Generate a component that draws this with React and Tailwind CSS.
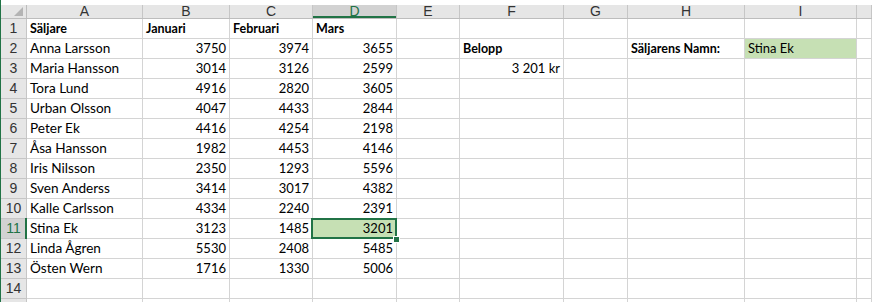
import React from "react";

const COLS = [
  { k: "A", w: "w-[116px]" },
  { k: "B", w: "w-[87px]" },
  { k: "C", w: "w-[83px]" },
  { k: "D", w: "w-[84px]" },
  { k: "E", w: "w-[63px]" },
  { k: "F", w: "w-[104px]" },
  { k: "G", w: "w-[64px]" },
  { k: "H", w: "w-[117px]" },
  { k: "I", w: "w-[112px]" },
  { k: "", w: "flex-1" },
];

const people = [
  ["Anna Larsson", 3750, 3974, 3655],
  ["Maria Hansson", 3014, 3126, 2599],
  ["Tora Lund", 4916, 2820, 3605],
  ["Urban Olsson", 4047, 4433, 2844],
  ["Peter Ek", 4416, 4254, 2198],
  ["Åsa Hansson", 1982, 4453, 4146],
  ["Iris Nilsson", 2350, 1293, 5596],
  ["Sven Anderss", 3414, 3017, 4382],
  ["Kalle Carlsson", 4334, 2240, 2391],
  ["Stina Ek", 3123, 1485, 3201],
  ["Linda Ågren", 5530, 2408, 5485],
  ["Östen Wern", 1716, 1330, 5006],
];

function buildRows() {
  const rows = [];
  for (let r = 1; r <= 15; r++) {
    const cells = {};
    if (r === 1) {
      cells.A = { t: "Säljare", b: true };
      cells.B = { t: "Januari", b: true };
      cells.C = { t: "Februari", b: true };
      cells.D = { t: "Mars", b: true };
    } else if (r <= 13) {
      const p = people[r - 2];
      cells.A = { t: p[0], name: true };
      cells.B = { t: String(p[1]), num: true };
      cells.C = { t: String(p[2]), num: true };
      cells.D = { t: String(p[3]), num: true };
    }
    if (r === 2) {
      cells.F = { t: "Belopp", b: true };
      cells.H = { t: "Säljarens Namn:", b: true };
      cells.I = { t: "Stina Ek", small: true, green: true };
    }
    if (r === 3) {
      cells.F = { t: "3 201 kr", small: true, right: true };
    }
    if (r === 11) {
      cells.D = { ...cells.D, green: true, selected: true };
    }
    rows.push(cells);
  }
  return rows;
}

const rows = buildRows();

function Cell({ col, cell }) {
  const base = `${col.w} h-[20px] shrink-0 border-r border-b border-[#d4d4d4] relative flex items-end pb-[1px] px-[3px] overflow-visible whitespace-nowrap text-black`;
  if (!cell) return <div className={base} />;
  const bg = cell.green ? "bg-[#c6e0b4]" : "";
  const align = cell.num || cell.right ? "justify-end" : "justify-start";
  let font = "text-[13.6px] leading-[18px]";
  if (cell.b) font = "text-[12.5px] leading-[16px] font-bold";
  else if (cell.num) font = "text-[13px] leading-[17px]";
  else if (cell.small) font = "text-[13px] leading-[17px]";
  return (
    <div className={`${base} ${bg} ${align}`}>
      <span className={font}>{cell.t}</span>
      {cell.selected && (
        <>
          <div className="absolute z-10 -left-[2px] -top-[1px] -right-[1px] -bottom-[1px] border-2 border-[#217346] pointer-events-none" />
          <div className="absolute z-20 -right-[4px] -bottom-[5px] w-[7px] h-[7px] bg-[#217346] border border-white pointer-events-none" />
        </>
      )}
    </div>
  );
}

export default function App() {
  return (
    <div
      className="w-[872px] h-[302px] overflow-hidden bg-white flex"
      style={{ fontFamily: "Lato, 'Noto Sans', sans-serif" }}
    >
      <div className="w-px shrink-0 bg-[#217346]" />
      <div className="flex-1 flex flex-col min-w-0">
        <div className="h-[5px] shrink-0" />
        {/* column header */}
        <div className="flex h-[14px] shrink-0 bg-[#e6e6e6] border-b border-[#bdbdbd]">
          <div className="w-[26px] shrink-0 border-r border-[#bdbdbd] relative">
            <svg className="absolute right-[3px] bottom-[2px]" width="9" height="9" viewBox="0 0 9 9">
              <polygon points="9,0 9,9 0,9" fill="#b4b4b4" />
            </svg>
          </div>
          {COLS.map((c, idx) => {
            const sel = c.k === "D";
            return (
              <div
                key={idx}
                className={`${c.w} shrink-0 border-r border-[#c6c6c6] flex items-end justify-center relative ${
                  sel ? "bg-[#d2d2d2] text-[#217346]" : "text-[#333]"
                }`}
                style={{ fontFamily: "'Liberation Sans', Arial, sans-serif" }}
              >
                <span className="text-[14px] leading-[13px]">{c.k}</span>
                {sel && <div className="absolute left-0 right-0 bottom-0 h-[2px] bg-[#217346]" />}
              </div>
            );
          })}
        </div>
        {rows.map((cells, i) => {
          const r = i + 1;
          const sel = r === 11;
          return (
            <div key={r} className="flex shrink-0">
              <div
                className={`w-[26px] h-[20px] shrink-0 border-r border-b border-[#c6c6c6] flex items-center justify-center relative ${
                  sel ? "bg-[#d2d2d2] text-[#217346]" : "bg-[#e6e6e6] text-[#333]"
                }`}
                style={{ fontFamily: "'Liberation Sans', Arial, sans-serif" }}
              >
                <span className="text-[14px] leading-[15px]">{r}</span>
                {sel && <div className="absolute -right-px -top-px -bottom-px w-[2px] bg-[#217346]" />}
              </div>
              {COLS.map((c, idx) => (
                <Cell key={idx} col={c} cell={cells[c.k]} />
              ))}
            </div>
          );
        })}
      </div>
    </div>
  );
}
